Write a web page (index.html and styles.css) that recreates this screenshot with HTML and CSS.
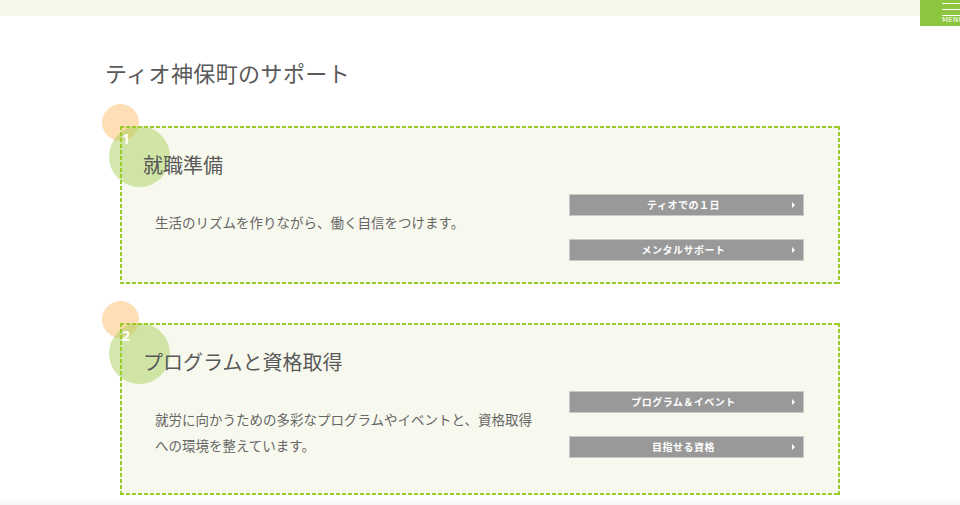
FILE: index.html
```html
<!DOCTYPE html>
<html lang="ja">
<head>
<meta charset="utf-8">
<title>ティオ神保町のサポート</title>
<link rel="stylesheet" href="styles.css">
</head>
<body>
<header class="topbar">
  <a class="menu-btn" href="#">
    <span class="menu-line"></span>
    <span class="menu-line"></span>
    <span class="menu-line"></span>
    <span class="menu-label">MENU</span>
  </a>
</header>
<main class="content">
  <h2 class="page-title">ティオ神保町のサポート</h2>

  <section class="support-box">
    <span class="dot dot-orange"></span>
    <span class="dot dot-green"></span>
    <span class="num">1</span>
    <h3 class="box-title">就職準備</h3>
    <div class="box-row">
      <p class="box-text">生活のリズムを作りながら、働く自信をつけます。</p>
      <div class="btns">
        <a class="btn" href="#">ティオでの１日</a>
        <a class="btn" href="#">メンタルサポート</a>
      </div>
    </div>
  </section>

  <section class="support-box">
    <span class="dot dot-orange"></span>
    <span class="dot dot-green"></span>
    <span class="num">2</span>
    <h3 class="box-title">プログラムと資格取得</h3>
    <div class="box-row">
      <p class="box-text">就労に向かうための多彩なプログラムやイベントと、資格取得への環境を整えています。</p>
      <div class="btns">
        <a class="btn" href="#">プログラム＆イベント</a>
        <a class="btn" href="#">目指せる資格</a>
      </div>
    </div>
  </section>
</main>
<div class="bottom-fade"></div>
</body>
</html>
```

FILE: styles.css
```css
html, body {
  margin: 0;
  padding: 0;
  background: #fff;
  font-family: "Noto Sans CJK JP", "Noto Sans", sans-serif;
  color: #666;
  overflow: hidden;
}

.topbar {
  height: 16px;
  background: #f7f8eb;
  position: relative;
}

.menu-btn {
  position: absolute;
  top: 0;
  right: 0;
  width: 40px;
  height: 26px;
  background: #8cc63e;
  overflow: hidden;
  text-decoration: none;
}

.menu-line {
  position: absolute;
  left: 22px;
  width: 24px;
  height: 1px;
  background: #fff;
}
.menu-line:nth-child(1) { top: 3px; }
.menu-line:nth-child(2) { top: 9px; }
.menu-line:nth-child(3) { top: 15px; }

.menu-label {
  position: absolute;
  left: 22px;
  top: 17px;
  font-family: "DejaVu Sans", sans-serif;
  font-size: 7px;
  line-height: 7px;
  color: #fff;
  letter-spacing: 0.3px;
}

.content {
  width: 720px;
  margin: 0 auto;
  padding-top: 40px;
}

.page-title {
  margin: 0 0 38px -15px;
  font-size: 22px;
  line-height: 32px;
  font-weight: 400;
  letter-spacing: 0.4px;
  color: #595959;
}

.support-box {
  position: relative;
  padding: 24px 36px 23px 35px;
  margin-bottom: 39px;
  background-color: #f8f9ee;
}

.support-box:last-child {
  margin-bottom: 0;
}

.support-box::after {
  content: "";
  position: absolute;
  inset: 0;
  pointer-events: none;
  z-index: 2;
  background-image:
    repeating-linear-gradient(90deg, #9acd2c 0 4px, transparent 4px 6px),
    repeating-linear-gradient(90deg, #9acd2c 0 4px, transparent 4px 6px),
    repeating-linear-gradient(180deg, #9acd2c 0 4px, transparent 4px 6px),
    repeating-linear-gradient(180deg, #9acd2c 0 4px, transparent 4px 6px);
  background-size: 100% 2px, 100% 2px, 2px 100%, 2px 100%;
  background-position: 0 0, 0 100%, 0 0, 100% 0;
  background-repeat: no-repeat;
}

.dot {
  position: absolute;
  border-radius: 50%;
  z-index: 1;
}
.dot-orange {
  left: -18px;
  top: -22px;
  width: 37px;
  height: 37px;
  background: rgba(253, 196, 120, 0.55);
}
.dot-green {
  left: -11px;
  top: 0;
  width: 61px;
  height: 61px;
  background: rgba(160, 205, 75, 0.45);
}

.num {
  position: absolute;
  left: 2px;
  top: 5px;
  z-index: 3;
  font-family: "Open Sans", "DejaVu Sans", sans-serif;
  font-weight: 700;
  font-size: 14px;
  line-height: 16px;
  color: #fff;
}

.box-title {
  position: relative;
  z-index: 3;
  margin: 0 0 14px -12px;
  font-size: 20px;
  line-height: 30px;
  font-weight: 400;
  color: #595959;
}

.box-row {
  display: flex;
  align-items: flex-start;
  gap: 28px;
}

.box-text {
  flex: 1;
  margin: 15px 0 14px;
  font-size: 13.5px;
  line-height: 26px;
  color: #666;
}

.btns {
  width: 235px;
  display: flex;
  flex-direction: column;
  gap: 23px;
}

.btn {
  position: relative;
  display: block;
  height: 20px;
  line-height: 20px;
  background: #999;
  border: 1px solid #c9c9c9;
  color: #fff;
  font-size: 10px;
  font-weight: 700;
  text-align: center;
  text-decoration: none;
  letter-spacing: 0.5px;
  padding-right: 6px;
}

.btn::after {
  content: "";
  position: absolute;
  right: 8px;
  top: 7px;
  border-left: 3px solid #fff;
  border-top: 3px solid transparent;
  border-bottom: 3px solid transparent;
}

.bottom-fade {
  height: 8px;
  margin-top: 2px;
  background: linear-gradient(#fff, #f6f6f6 8px);
}
```
